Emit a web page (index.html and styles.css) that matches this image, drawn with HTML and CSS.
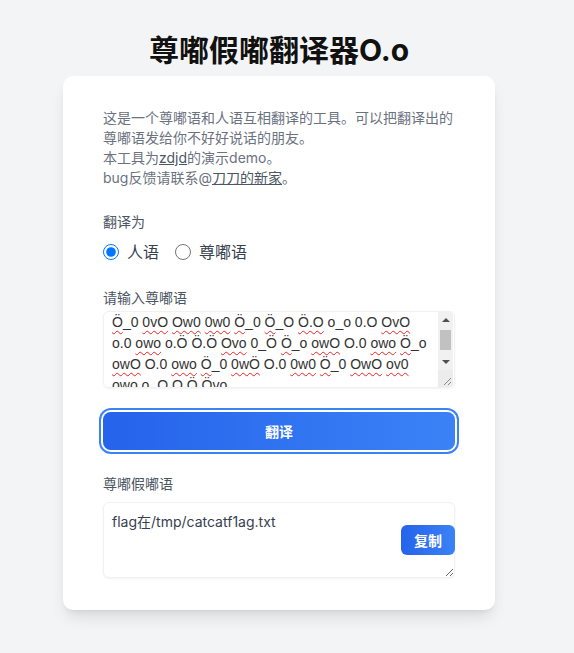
FILE: index.html
```html
<!DOCTYPE html>
<html lang="zh-CN">
<head>
<meta charset="utf-8">
<title>尊嘟假嘟翻译器O.o</title>
<link rel="stylesheet" href="styles.css">
</head>
<body>
<div class="page">
  <h1 class="title">尊嘟假嘟翻译器O.o</h1>
  <div class="card">
    <p class="intro">这是一个尊嘟语和人语互相翻译的工具。可以把翻译出的<br>尊嘟语发给你不好好说话的朋友。<br>本工具为<a class="link" href="#">zdjd</a>的演示demo。<br>bug反馈请联系@<a class="link" href="#">刀刀的新家</a>。</p>

    <div class="label label-first">翻译为</div>
    <div class="radios">
      <label class="radio-opt"><input class="radio" type="radio" name="to" checked><span>人语</span></label>
      <label class="radio-opt"><input class="radio" type="radio" name="to"><span>尊嘟语</span></label>
    </div>

    <div class="label label-input">请输入尊嘟语</div>
    <div class="input-box">
      <div class="input-text" role="textbox"><u class="sp">&#214;</u>_0 <u class="sp">0vO</u> <u class="sp">Ow0</u> <u class="sp">0w0</u> <u class="sp">&#214;</u>_0 <u class="sp">&#214;</u>_O <u class="sp">&#214;.O</u> o_o 0.O <u class="sp">OvO</u><br>o.0 <u class="sp">owo</u> o.&#214; &#214;.&#214; <u class="sp">Ovo</u> 0_&#214; <u class="sp">&#214;</u>_o <u class="sp">owO</u> O.0 <u class="sp">owo</u> <u class="sp">&#214;</u>_o<br><u class="sp">owO</u> O.0 <u class="sp">owo</u> <u class="sp">&#214;</u>_0 <u class="sp">0w&#214;</u> O.0 <u class="sp">0w0</u> <u class="sp">&#214;</u>_0 <u class="sp">OwO</u> <u class="sp">ov0</u><br><u class="sp">owo</u> o_O <u class="sp">O.&#214;</u> <u class="sp">&#214;vo</u></div>
      <div class="scrollbar" aria-hidden="true">
        <div class="sb-btn"><span class="arrow-up"></span></div>
        <div class="sb-track"><div class="sb-thumb"></div></div>
        <div class="sb-btn"><span class="arrow-down"></span></div>
        <div class="sb-corner">
          <svg width="15" height="15" viewBox="0 0 15 15"><path d="M13 6 L6 13 M13 10 L10 13" stroke="#8a8a8a" stroke-width="1" fill="none"/></svg>
        </div>
      </div>
    </div>

    <button class="btn-main" type="button">翻译</button>

    <div class="label label-output">尊嘟假嘟语</div>
    <div class="output-wrap">
      <textarea class="output" readonly>flag在/tmp/catcatf1ag.txt</textarea>
      <button class="btn-copy" type="button">复制</button>
    </div>
  </div>
</div>
</body>
</html>
```

FILE: styles.css
```css
body {
  margin: 0;
  background: #f3f4f6;
  font-family: Inter, "Noto Sans CJK SC", sans-serif;
}

.page {
  width: 558px;
  padding: 32px 0 40px;
  display: flex;
  flex-direction: column;
  align-items: center;
}

.title {
  margin: 0 0 8px;
  font-size: 30px;
  line-height: 36px;
  font-weight: 700;
  color: #111111;
}

.card {
  width: 432px;
  box-sizing: border-box;
  background: #ffffff;
  border-radius: 10px;
  padding: 32px 40px;
  box-shadow: 0 10px 15px -3px rgba(0, 0, 0, 0.1), 0 4px 6px -4px rgba(0, 0, 0, 0.1);
}

.intro {
  margin: 0;
  font-size: 14px;
  line-height: 20px;
  color: #6b7280;
}

.link {
  color: #4b5563;
  text-decoration: underline;
}

.label {
  font-size: 14px;
  line-height: 20px;
  color: #4b5563;
}

.label-first {
  margin-top: 24px;
  margin-bottom: 8px;
}

.label-input {
  margin-top: 24px;
  margin-bottom: 3px;
}

.label-output {
  margin-top: 24px;
  margin-bottom: 8px;
}

.radios {
  display: flex;
  gap: 16px;
  height: 24px;
  align-items: center;
}

.radio-opt {
  display: flex;
  align-items: center;
  font-size: 16px;
  line-height: 24px;
  color: #374151;
}

.radio {
  width: 16px;
  height: 16px;
  margin: 0 8px 0 0;
}

.input-box {
  box-sizing: border-box;
  height: 77px;
  display: flex;
  border: 1px solid #f1f1f1;
  border-radius: 6px;
  box-shadow: 0 1px 2px rgba(0, 0, 0, 0.05);
  overflow: hidden;
}

.input-text {
  flex: 1;
  min-width: 0;
  padding: 0 8px;
  overflow: hidden;
  font-family: "Liberation Sans", Arial, sans-serif;
  font-size: 14px;
  line-height: 21px;
  color: #333333;
  white-space: nowrap;
}

.sp {
  text-decoration: underline wavy #ee2222;
  text-decoration-thickness: 1px;
  text-underline-offset: 3px;
}

.scrollbar {
  width: 15px;
  margin-right: 1px;
  display: flex;
  flex-direction: column;
  background: #f1f1f1;
}

.sb-btn {
  height: 16px;
  display: flex;
  align-items: center;
  justify-content: center;
}

.arrow-up {
  width: 0;
  height: 0;
  border-left: 4px solid transparent;
  border-right: 4px solid transparent;
  border-bottom: 4px solid #505050;
}

.arrow-down {
  width: 0;
  height: 0;
  border-left: 4px solid transparent;
  border-right: 4px solid transparent;
  border-top: 4px solid #505050;
}

.sb-track {
  flex: 1;
  padding: 2px 2px;
  display: flex;
  flex-direction: column;
}

.sb-thumb {
  height: 20px;
  background: #c1c1c1;
}

.sb-corner {
  height: 17px;
  display: flex;
  align-items: flex-end;
  justify-content: flex-end;
  background: #ececec;
}

.sb-corner svg {
  display: block;
}

.btn-main {
  display: block;
  width: 100%;
  height: 38px;
  margin-top: 24px;
  border: none;
  border-radius: 8px;
  background: linear-gradient(to right, #2563eb, #3b82f6);
  color: #ffffff;
  font-family: inherit;
  font-size: 14px;
  font-weight: 600;
  box-shadow: 0 0 0 2px #ffffff, 0 0 0 4px #3b82f6;
}

.output-wrap {
  position: relative;
}

.output {
  display: block;
  box-sizing: border-box;
  width: 100%;
  height: 76px;
  margin: 0;
  padding: 8px;
  border: 1px solid #f1f1f1;
  border-radius: 6px;
  box-shadow: 0 1px 2px rgba(0, 0, 0, 0.05);
  resize: vertical;
  font-family: inherit;
  font-size: 14px;
  line-height: 21px;
  color: #374151;
  outline: none;
}

.btn-copy {
  position: absolute;
  right: 0;
  top: 23px;
  width: 54px;
  height: 30px;
  border: none;
  border-radius: 6px;
  background: linear-gradient(to right, #2563eb, #3b82f6);
  color: #ffffff;
  font-family: inherit;
  font-size: 14px;
  font-weight: 700;
}
```
